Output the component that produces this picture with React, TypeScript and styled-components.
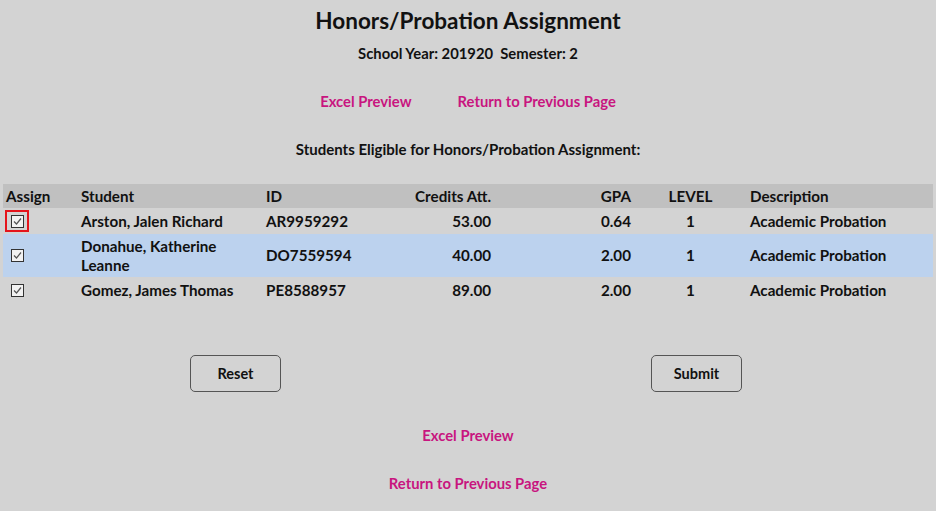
import { createGlobalStyle, styled } from "styled-components";

const GlobalStyle = createGlobalStyle`
  html, body {
    margin: 0;
    padding: 0;
    background: #d3d3d3;
    font-family: Lato, "Noto Sans", sans-serif;
    color: #111;
  }
`;

const Page = styled.div`
  display: flex;
  flex-direction: column;
  align-items: center;
  padding: 8px 3px 0;
  min-height: 503px;
`;

const Title = styled.h1`
  margin: 0;
  font-size: 22.5px;
  line-height: 26px;
  font-weight: 700;
`;

const SubTitle = styled.div`
  margin-top: 10px;
  font-size: 14.8px;
  line-height: 18px;
  font-weight: 700;
  white-space: pre;
`;

const LinkRow = styled.div<{ $top: number }>`
  display: flex;
  gap: 46px;
  margin-top: ${(p) => p.$top}px;
`;

const PinkLink = styled.a`
  color: #c8157f;
  font-size: 14.8px;
  line-height: 18px;
  font-weight: 700;
  text-decoration: none;
  cursor: pointer;
`;

const SectionLabel = styled.div`
  margin-top: 30px;
  font-size: 15px;
  line-height: 18px;
  font-weight: 700;
`;

const Table = styled.table`
  margin-top: 26px;
  width: 930px;
  border-collapse: collapse;
  table-layout: fixed;
  font-size: 15.2px;
  font-weight: 700;
`;

const Th = styled.th<{ $align?: string }>`
  background: #c0c0c0;
  height: 24px;
  padding: 0 3px;
  text-align: ${(p) => p.$align || "left"};
  font-weight: 700;
  line-height: 18px;
`;

const Tr = styled.tr<{ $hl?: boolean }>`
  background: ${(p) => (p.$hl ? "#bcd2ee" : "transparent")};
`;

const Td = styled.td<{ $align?: string; $padRight?: number }>`
  padding: 3px ${(p) => p.$padRight ?? 3}px 3px 3px;
  height: 20px;
  line-height: 18.5px;
  text-align: ${(p) => p.$align || "left"};
  vertical-align: middle;
`;

const CheckWrap = styled.span<{ $focus?: boolean }>`
  display: flex;
  align-items: center;
  justify-content: center;
  width: 20px;
  height: 18px;
  margin-left: 1px;
  outline: ${(p) => (p.$focus ? "2px solid #e5141b" : "none")};
`;

const Box = styled.span`
  display: inline-flex;
  align-items: center;
  justify-content: center;
  width: 13px;
  height: 13px;
  box-sizing: border-box;
  border: 1px solid #333;
  background: #f2f2f2;
`;

const ButtonRow = styled.div`
  align-self: stretch;
  display: flex;
  justify-content: space-between;
  padding: 0 191px 0 187px;
  margin-top: 52px;
`;

const Button = styled.button`
  width: 91px;
  height: 37px;
  border: 1px solid #555;
  border-radius: 5px;
  background: transparent;
  font-family: Lato, "Noto Sans", sans-serif;
  font-size: 14.5px;
  font-weight: 700;
  color: #111;
`;

const Check = ({ focus }: { focus?: boolean }) => (
  <CheckWrap $focus={focus}>
    <Box>
      <svg width="11" height="11" viewBox="0 0 11 11">
        <path d="M2 5.5 L4.5 8 L9 2.5" fill="none" stroke="#555" strokeWidth="1.2" />
      </svg>
    </Box>
  </CheckWrap>
);

const rows = [
  { name: "Arston, Jalen Richard", id: "AR9959292", cr: "53.00", gpa: "0.64" },
  { name: "Donahue, Katherine Leanne", id: "DO7559594", cr: "40.00", gpa: "2.00" },
  { name: "Gomez, James Thomas", id: "PE8588957", cr: "89.00", gpa: "2.00" },
];

export default function App() {
  return (
    <>
      <GlobalStyle />
      <Page>
        <Title>Honors/Probation Assignment</Title>
        <SubTitle>{"School Year: 201920  Semester: 2"}</SubTitle>
        <LinkRow $top={30}>
          <PinkLink>Excel Preview</PinkLink>
          <PinkLink>Return to Previous Page</PinkLink>
        </LinkRow>
        <SectionLabel>Students Eligible for Honors/Probation Assignment:</SectionLabel>
        <Table>
          <colgroup>
            <col style={{ width: 75 }} />
            <col style={{ width: 185 }} />
            <col style={{ width: 97 }} />
            <col style={{ width: 134 }} />
            <col style={{ width: 140 }} />
            <col style={{ width: 113 }} />
            <col style={{ width: 186 }} />
          </colgroup>
          <thead>
            <tr>
              <Th>Assign</Th>
              <Th>Student</Th>
              <Th>ID</Th>
              <Th $align="right">Credits Att.</Th>
              <Th $align="right">GPA</Th>
              <Th $align="center">LEVEL</Th>
              <Th>Description</Th>
            </tr>
          </thead>
          <tbody>
            {rows.map((r, i) => (
              <Tr key={r.id} $hl={i === 1}>
                <Td>
                  <Check focus={i === 0} />
                </Td>
                <Td $padRight={12}>{r.name}</Td>
                <Td>{r.id}</Td>
                <Td $align="right">{r.cr}</Td>
                <Td $align="right">{r.gpa}</Td>
                <Td $align="center">1</Td>
                <Td>Academic Probation</Td>
              </Tr>
            ))}
          </tbody>
        </Table>
        <ButtonRow>
          <Button>Reset</Button>
          <Button>Submit</Button>
        </ButtonRow>
        <LinkRow $top={34}>
          <PinkLink>Excel Preview</PinkLink>
        </LinkRow>
        <LinkRow $top={30}>
          <PinkLink>Return to Previous Page</PinkLink>
        </LinkRow>
      </Page>
    </>
  );
}
